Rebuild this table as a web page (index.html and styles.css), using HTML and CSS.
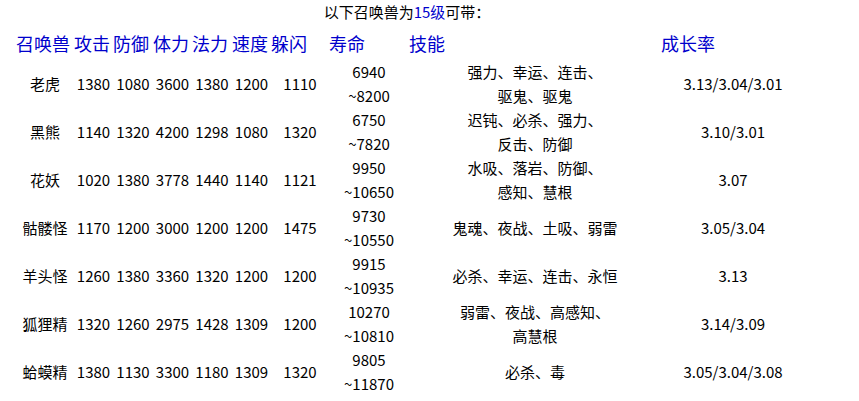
FILE: index.html
```html
<!DOCTYPE html>
<html lang="zh-CN">
<head>
<meta charset="utf-8">
<title>召唤兽</title>
<link rel="stylesheet" href="styles.css">
</head>
<body>
<div class="title">以下召唤兽为<span class="blue">15级</span>可带：</div>
<div class="table">
  <div class="grid head">
    <div>召唤兽</div><div>攻击</div><div>防御</div><div>体力</div><div>法力</div><div>速度</div><div>躲闪</div><div>寿命</div><div>技能</div><div class="growth-h">成长率</div>
  </div>
  <div class="grid row">
    <div>老虎</div><div>1380</div><div>1080</div><div>3600</div><div>1380</div><div>1200</div><div>1110</div><div>6940<br>~8200</div><div>强力、幸运、连击、<br>驱鬼、驱鬼</div><div>3.13/3.04/3.01</div>
  </div>
  <div class="grid row">
    <div>黑熊</div><div>1140</div><div>1320</div><div>4200</div><div>1298</div><div>1080</div><div>1320</div><div>6750<br>~7820</div><div>迟钝、必杀、强力、<br>反击、防御</div><div>3.10/3.01</div>
  </div>
  <div class="grid row">
    <div>花妖</div><div>1020</div><div>1380</div><div>3778</div><div>1440</div><div>1140</div><div>1121</div><div>9950<br>~10650</div><div>水吸、落岩、防御、<br>感知、慧根</div><div>3.07</div>
  </div>
  <div class="grid row">
    <div>骷髅怪</div><div>1170</div><div>1200</div><div>3000</div><div>1200</div><div>1200</div><div>1475</div><div>9730<br>~10550</div><div>鬼魂、夜战、土吸、弱雷</div><div>3.05/3.04</div>
  </div>
  <div class="grid row">
    <div>羊头怪</div><div>1260</div><div>1380</div><div>3360</div><div>1320</div><div>1200</div><div>1200</div><div>9915<br>~10935</div><div>必杀、幸运、连击、永恒</div><div>3.13</div>
  </div>
  <div class="grid row">
    <div>狐狸精</div><div>1320</div><div>1260</div><div>2975</div><div>1428</div><div>1309</div><div>1200</div><div>10270<br>~10810</div><div>弱雷、夜战、高感知、<br>高慧根</div><div>3.14/3.09</div>
  </div>
  <div class="grid row">
    <div>蛤蟆精</div><div>1380</div><div>1130</div><div>3300</div><div>1180</div><div>1309</div><div>1320</div><div>9805<br>~11870</div><div>必杀、毒</div><div>3.05/3.04/3.08</div>
  </div>
</div>
</body>
</html>
```

FILE: styles.css
```css
html, body {
  margin: 0;
  padding: 0;
  background: #ffffff;
}
body {
  font-family: "Noto Sans CJK SC", "Noto Sans", sans-serif;
  color: #000000;
  font-size: 15px;
}
.title {
  width: 814px;
  text-align: center;
  line-height: 24px;
  height: 24px;
  font-size: 15px;
}
.blue {
  color: #0000cc;
}
.table {
  margin-left: 16px;
}
.grid {
  display: grid;
  grid-template-columns: 58px 39px 40px 39px 40px 39px 58px 80px 252px 144px;
  align-items: center;
}
.head {
  height: 36px;
  padding-top: 2px;
  box-sizing: border-box;
  color: #0000cc;
  font-size: 18px;
  line-height: 24px;
  white-space: nowrap;
}
.row {
  height: 48px;
  line-height: 24px;
  text-align: center;
  white-space: nowrap;
}
```
